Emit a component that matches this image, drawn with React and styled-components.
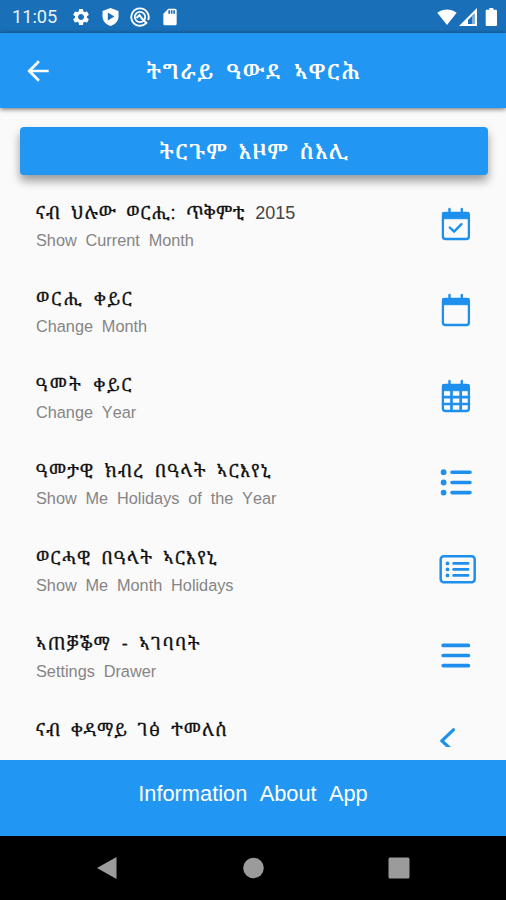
import React from 'react';
import styled, { createGlobalStyle } from 'styled-components';
import { MdSettings, MdSdCard, MdArrowBack, MdSignalWifi4Bar } from 'react-icons/md';

const GlobalStyle = createGlobalStyle`
  * {
    box-sizing: border-box;
  }

  body {
    margin: 0;
    background: #000;
    font-family: "Liberation Sans", "Noto Serif Ethiopic", "Abyssinica SIL", "Noto Sans Ethiopic", sans-serif;
    font-kerning: none;
  }
`;

const Screen = styled.div`
  display: flex;
  flex-direction: column;
  width: 506px;
  height: 900px;
  background: #fafafa;
  overflow: hidden;
`;

const StatusBar = styled.div`
  display: flex;
  align-items: center;
  justify-content: space-between;
  height: 33px;
  flex-shrink: 0;
  padding: 1px 9px 0 12px;
  background: #1a70b8;
  color: #fff;
`;

const StatusGroup = styled.div`
  display: flex;
  align-items: center;
  gap: ${(props) => props.$gap}px;

  svg {
    display: block;
  }
`;

const Clock = styled.span`
  width: 48px;
  margin-right: 1px;
  font-family: Roboto, sans-serif;
  font-size: 18.2px;
  line-height: 32px;
  color: #e9f2fa;
`;

const AppBar = styled.header`
  display: grid;
  grid-template-columns: 76px 1fr 76px;
  align-items: center;
  height: 75px;
  flex-shrink: 0;
  background: #2196f3;
  box-shadow: 0 1px 5px rgba(0, 0, 0, 0.6);
  color: #fff;
`;

const BackButton = styled.button`
  display: flex;
  justify-content: center;
  padding: 0;
  border: 0;
  background: none;
  color: inherit;
`;

const Heading = styled.h1`
  margin: 0;
  padding: 2px 0 0 2px;
  text-align: center;
  font-size: 21.5px;
  font-weight: 600;
  line-height: 30px;
  white-space: nowrap;
  letter-spacing: 1.5px;
  word-spacing: 5px;
`;

const TranslateButton = styled.button`
  height: 48px;
  flex-shrink: 0;
  margin: 19px 18px 0 20px;
  padding: 2px 0 0;
  border: 0;
  border-radius: 4px;
  background: #2196f3;
  box-shadow: 0 6px 10px rgba(0, 0, 0, 0.38);
  color: #fff;
  font-family: inherit;
  font-size: 21px;
  font-weight: 600;
  line-height: 46px;
  white-space: nowrap;
  letter-spacing: 0.6px;
  word-spacing: 5px;
`;

const List = styled.div`
  height: 565px;
  flex-shrink: 0;
  margin-top: 7px;
  overflow: hidden;
`;

const Row = styled.div`
  display: flex;
  justify-content: space-between;
  height: 86.17px;
  padding: 16px 30px 0 36px;
`;

const RowText = styled.div`
  display: flex;
  flex-direction: column;
`;

const RowTitle = styled.div`
  height: 28px;
  padding-top: 1px;
  font-size: 18px;
  line-height: 28px;
  white-space: nowrap;
  word-spacing: 4px;
  color: #111;
  -webkit-text-stroke: 0.3px #111;
  letter-spacing: ${(props) => props.$spacing}px;
`;

const Year = styled.span`
  letter-spacing: 0;
  color: #444;
  -webkit-text-stroke: 0;
`;

const RowSubtitle = styled.div`
  height: 28px;
  font-size: 16.3px;
  line-height: 28px;
  white-space: nowrap;
  word-spacing: 4.3px;
  color: #858585;
`;

const RowIcon = styled.svg`
  display: block;
  width: 38px;
  height: 36px;
  margin-top: 9px;
  fill: none;
  stroke: #1e8fec;
  stroke-linecap: round;
  stroke-linejoin: round;
`;

const Footer = styled.footer`
  height: 76px;
  flex-shrink: 0;
  margin-top: 13px;
  background: #2196f3;
  color: #fff;
  font-size: 21.8px;
  line-height: 67px;
  text-align: center;
  word-spacing: 6.3px;
`;

const NavBar = styled.nav`
  display: flex;
  align-items: center;
  justify-content: space-between;
  flex: 1;
  padding: 0 96px;
  background: #000;
  fill: #9b9b9b;
`;

const CalendarBody = () => (
  <>
    <rect x="4.9" y="6" width="26" height="26" rx="2.6" strokeWidth="2.3" />
    <path d="M5 5.5h26v6.2H5z" fill="#1e8fec" strokeWidth="1" />
    <path d="M11.5 2v5M23.8 2v5" strokeWidth="2.4" />
  </>
);

const icons = {
  check: (
    <>
      <CalendarBody />
      <path d="m11.8 20.5 4.3 4.2 7.4-7.5" strokeWidth="2.4" />
    </>
  ),
  blank: <CalendarBody />,
  grid: (
    <>
      <CalendarBody />
      <path d="M13.5 12v19M22.7 12v19M5 18.2h26M5 25h26" strokeWidth="2.7" />
    </>
  ),
  list: (
    <>
      <path d="M5.6 7.2h.01M5.6 17.5h.01M5.6 27.6h.01" strokeWidth="5.8" />
      <path d="M14 7.2h18M14 17.5h18M14 27.6h18" strokeWidth="3.6" />
    </>
  ),
  card: (
    <>
      <rect x="2.7" y="4.3" width="34" height="26" rx="3" strokeWidth="2.5" />
      <path d="M9.5 11.4h.01M9.5 17.4h.01M9.5 23.4h.01" strokeWidth="3.8" />
      <path d="M15.6 11.4h14.5M15.6 17.4h14.5M15.6 23.4h14.5" strokeWidth="2.7" />
    </>
  ),
  menu: <path d="M5.2 7.4h25.2M5.2 17.5h25.2M5.2 27.6h25.2" strokeWidth="3.7" />,
  back: <path d="M15.4 5.8 3.8 16.8l12 11" strokeWidth="3.2" />,
};

const rows = [
  { title: 'ናብ ህሉው ወርሒ: ጥቅምቲ ', year: '2015', subtitle: 'Show Current Month', icon: 'check', spacing: 0.8 },
  { title: 'ወርሒ ቀይር', subtitle: 'Change Month', icon: 'blank', spacing: 1.85 },
  { title: 'ዓመት ቀይር', subtitle: 'Change Year', icon: 'grid', spacing: 2.05 },
  { title: 'ዓመታዊ ክብረ በዓላት ኣርእየኒ', subtitle: 'Show Me Holidays of the Year', icon: 'list', spacing: 1.2 },
  { title: 'ወርሓዊ በዓላት ኣርእየኒ', subtitle: 'Show Me Month Holidays', icon: 'card', spacing: 1.15 },
  { title: 'ኣጠቓቕማ - ኣገባባት', subtitle: 'Settings Drawer', icon: 'menu', spacing: 1.35 },
  { title: 'ናብ ቀዳማይ ገፅ ተመለስ', icon: 'back', spacing: 1 },
];

const App = () => {
  return (
    <>
      <GlobalStyle />
      <Screen>
        <StatusBar>
          <StatusGroup $gap={9.7}>
            <Clock>11:05</Clock>
            <MdSettings size={20} />
            <svg width="20" height="20" viewBox="0 0 20 20">
              <path d="M10.5 1 18.5 4v5.5c0 4.4-3.2 7.8-8 9.5-4.8-1.7-8-5.1-8-9.5V4z" fill="#fff" />
              <path d="M7.8 5.5v8l6.6-4z" fill="#1a70b8" />
            </svg>
            <svg width="20" height="20" viewBox="0 0 20 20" fill="none" stroke="#fff">
              <path d="M16.2 16.2A8.7 8.7 0 1 1 18.2 13" strokeWidth="1.9" />
              <circle cx="10" cy="10" r="5.2" strokeWidth="1.8" />
              <path d="m6.5 11 3-3 2 3 5.5 5.5" strokeWidth="2" />
            </svg>
            <MdSdCard size={20} />
          </StatusGroup>
          <StatusGroup $gap={2}>
            <MdSignalWifi4Bar size={20} />
            <svg width="18" height="18" viewBox="0 0 18 18">
              <path d="M18 0v18H0z" fill="#fff" />
              <path d="M15.5 5.5v10.4H9V12z" fill="#1a70b8" />
              <path d="M13 8.5v7.4h2.5V6z" fill="#7fb0d8" />
            </svg>
            <svg width="18" height="18" viewBox="0 0 18 18">
              <path d="M10.3 0h4v1.8H17q1 0 1 1V17q0 1-1 1H7.700q-1 0-1-1V2.800q0-1 1-1h2.600z" fill="#fff" />
            </svg>
          </StatusGroup>
        </StatusBar>

        <AppBar>
          <BackButton aria-label="Back">
            <MdArrowBack size={32} />
          </BackButton>
          <Heading>ትግራይ ዓውደ ኣዋርሕ</Heading>
        </AppBar>

        <TranslateButton>ትርጉም እዞም ስእሊ</TranslateButton>

        <List>
          {rows.map((row) => (
            <Row key={row.icon}>
              <RowText>
                <RowTitle $spacing={row.spacing}>
                  {row.title}
                  {row.year && <Year>{row.year}</Year>}
                </RowTitle>
                {row.subtitle && <RowSubtitle>{row.subtitle}</RowSubtitle>}
              </RowText>
              <RowIcon viewBox="0 0 38 36">{icons[row.icon]}</RowIcon>
            </Row>
          ))}
        </List>

        <Footer>Information About App</Footer>

        <NavBar>
          <svg width="22" height="24" viewBox="0 0 22 24">
            <path d="M1 12 20.5 1v22z" />
          </svg>
          <svg width="22" height="22" viewBox="0 0 22 22">
            <circle cx="11.5" cy="11" r="10.3" />
          </svg>
          <svg width="22" height="22" viewBox="0 0 22 22">
            <rect x="0.5" y="0.5" width="21" height="21" rx="1.5" />
          </svg>
        </NavBar>
      </Screen>
    </>
  );
};

export default App;
